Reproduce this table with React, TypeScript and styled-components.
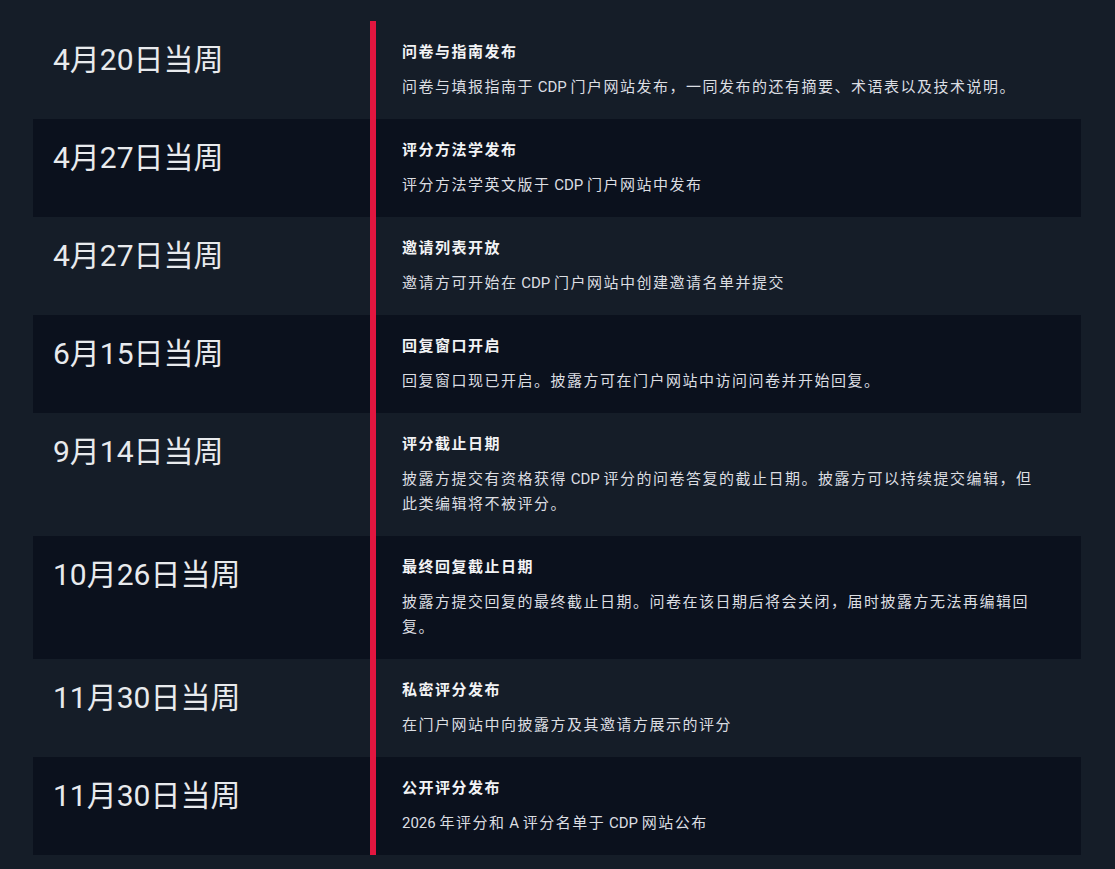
import React from 'react';
import styled, { createGlobalStyle } from 'styled-components';

const GlobalStyle = createGlobalStyle`
  html, body {
    margin: 0;
    padding: 0;
    background: #151d28;
  }
  body {
    font-family: Roboto, "Noto Sans CJK SC", sans-serif;
    color: #e6e8eb;
  }
`;

interface Milestone {
  week: string;
  title: string;
  text: string;
}

const milestones: Milestone[] = [
  {
    week: '4月20日当周',
    title: '问卷与指南发布',
    text: '问卷与填报指南于 CDP 门户网站发布，一同发布的还有摘要、术语表以及技术说明。',
  },
  {
    week: '4月27日当周',
    title: '评分方法学发布',
    text: '评分方法学英文版于 CDP 门户网站中发布',
  },
  {
    week: '4月27日当周',
    title: '邀请列表开放',
    text: '邀请方可开始在 CDP 门户网站中创建邀请名单并提交',
  },
  {
    week: '6月15日当周',
    title: '回复窗口开启',
    text: '回复窗口现已开启。披露方可在门户网站中访问问卷并开始回复。',
  },
  {
    week: '9月14日当周',
    title: '评分截止日期',
    text: '披露方提交有资格获得 CDP 评分的问卷答复的截止日期。披露方可以持续提交编辑，但此类编辑将不被评分。',
  },
  {
    week: '10月26日当周',
    title: '最终回复截止日期',
    text: '披露方提交回复的最终截止日期。问卷在该日期后将会关闭，届时披露方无法再编辑回复。',
  },
  {
    week: '11月30日当周',
    title: '私密评分发布',
    text: '在门户网站中向披露方及其邀请方展示的评分',
  },
  {
    week: '11月30日当周',
    title: '公开评分发布',
    text: '2026 年评分和 A 评分名单于 CDP 网站公布',
  },
];

const Timeline = styled.div`
  padding: 21px 34px 14px 33px;
`;

const Row = styled.div<{ $shaded: boolean }>`
  display: grid;
  grid-template-columns: 337px 1fr;
  background: ${({ $shaded }) => ($shaded ? '#0b111d' : 'transparent')};
`;

const Week = styled.div`
  padding: 20px 20px;
  font-size: 30px;
  line-height: 38px;
  font-weight: 400;
  color: #e8eaed;
  white-space: nowrap;
`;

const Detail = styled.div`
  border-left: 6px solid #e2163f;
  padding: 20px 40px 19px 26px;
`;

const Title = styled.div`
  font-size: 15px;
  line-height: 22px;
  font-weight: 700;
  letter-spacing: 1.5px;
  color: #f2f3f5;
  margin-bottom: 12px;
`;

const Text = styled.div`
  font-size: 15px;
  line-height: 25px;
  letter-spacing: 1.5px;
  color: #dcdee2;
`;

// latin runs (CDP, 2026, A) are not spaced out like the CJK glyphs
const Latin = styled.span`
  letter-spacing: 0;
`;

function renderText(text: string) {
  return text.split(/([A-Za-z0-9 ]+)/).map((part, i) =>
    i % 2 === 1 ? <Latin key={i}>{part}</Latin> : part
  );
}

export default function App() {
  return (
    <>
      <GlobalStyle />
      <Timeline>
        {milestones.map((m, i) => (
          <Row key={i} $shaded={i % 2 === 1}>
            <Week>{m.week}</Week>
            <Detail>
              <Title>{m.title}</Title>
              <Text>{renderText(m.text)}</Text>
            </Detail>
          </Row>
        ))}
      </Timeline>
    </>
  );
}
